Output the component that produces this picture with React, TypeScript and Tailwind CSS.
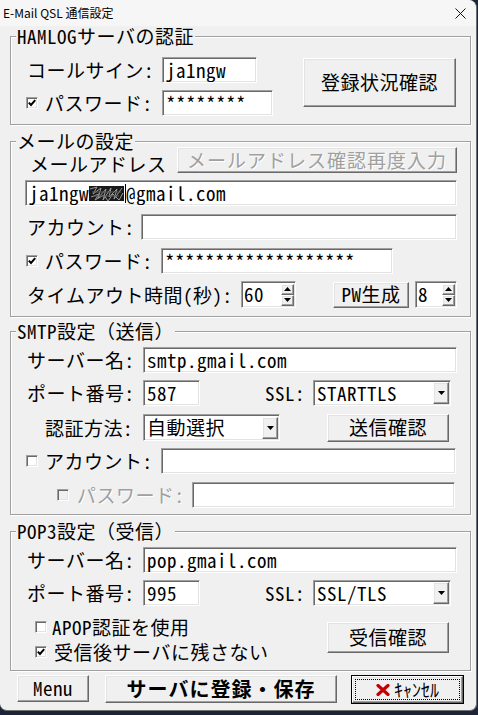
import React from "react";

const face = "[font-family:'Noto_Sans_Mono_CJK_JP','Noto_Sans_CJK_JP',monospace]";

// classic win32 3D edges
const edit =
  "bg-white border border-t-[#a0a0a0] border-l-[#a0a0a0] border-r-white border-b-white shadow-[inset_1px_1px_0_#696969,inset_-1px_-1px_0_#e3e3e3]";
const raised =
  "bg-[#f0f0f0] border border-t-white border-l-white border-r-[#696969] border-b-[#696969] shadow-[inset_-1px_-1px_0_#a0a0a0,inset_1px_1px_0_#e3e3e3]";
const group =
  "ml-[10px] w-[461px] border border-[#a0a0a0] shadow-[inset_1px_1px_0_#fff,1px_1px_0_#fff]";
const legend = "ml-[5px] px-[1px] bg-[#f0f0f0] leading-[20px]";

function Edit({
  className = "",
  children,
}: {
  className?: string;
  children?: React.ReactNode;
}) {
  return (
    <div
      className={`${edit} shrink-0 h-[26px] flex items-center pl-[3px] whitespace-nowrap overflow-hidden ${className}`}
    >
      {children}
    </div>
  );
}

function Button({
  className = "",
  children,
}: {
  className?: string;
  children?: React.ReactNode;
}) {
  return (
    <div
      className={`${raised} shrink-0 flex items-center justify-center whitespace-nowrap ${className}`}
    >
      {children}
    </div>
  );
}

function Check({
  checked = false,
  disabled = false,
}: {
  checked?: boolean;
  disabled?: boolean;
}) {
  return (
    <span
      className={`shrink-0 w-[12px] h-[12px] flex items-center justify-center border border-t-[#a0a0a0] border-l-[#a0a0a0] border-r-white border-b-white shadow-[inset_1px_1px_0_#696969,inset_-1px_-1px_0_#e3e3e3] ${
        disabled ? "bg-[#f0f0f0]" : "bg-white"
      }`}
    >
      {checked && (
        <svg width="8" height="8" viewBox="0 0 8 8">
          <path d="M0.8 3.6 L3 6 L7.2 1.2" stroke="#000" strokeWidth="2" fill="none" />
        </svg>
      )}
    </span>
  );
}

function Label({
  className = "",
  children,
}: {
  className?: string;
  children?: React.ReactNode;
}) {
  return (
    <span className={`shrink-0 whitespace-nowrap leading-[20px] ${className}`}>{children}</span>
  );
}

function Tri({ up = false }: { up?: boolean }) {
  return (
    <svg width="7" height="4" viewBox="0 0 7 4">
      <path d={up ? "M0 4 L3.5 0 L7 4Z" : "M0 0 L7 0 L3.5 4Z"} fill="#000" />
    </svg>
  );
}

function Select({
  className = "",
  children,
}: {
  className?: string;
  children?: React.ReactNode;
}) {
  return (
    <div className={`${edit} shrink-0 flex items-center ${className}`}>
      <span className="flex-1 pl-[3px] whitespace-nowrap overflow-hidden">{children}</span>
      <span className={`${raised} w-[16px] h-[22px] mr-[1px] flex items-center justify-center`}>
        <Tri />
      </span>
    </div>
  );
}

function Spin({
  className = "",
  children,
}: {
  className?: string;
  children?: React.ReactNode;
}) {
  return (
    <div className={`${edit} shrink-0 h-[27px] flex items-center ${className}`}>
      <span className="flex-1 pl-[2px]">{children}</span>
      <span className="flex flex-col w-[13px] mr-[1px]">
        <span className={`${raised} h-[11px] flex items-center justify-center`}>
          <Tri up />
        </span>
        <span className={`${raised} h-[11px] flex items-center justify-center`}>
          <Tri />
        </span>
      </span>
    </div>
  );
}

export default function App() {
  return (
    <div className="w-[478px] h-[715px] bg-[#1c2538] overflow-hidden">
      <div
        className={`w-[477px] h-[711px] bg-[#f0f0f0] rounded-tr-[8px] rounded-b-[7px] border-r border-b border-[#6f6f6f] text-black text-[19px] tracking-[0.5px] ${face}`}
      >
        {/* title bar */}
        <div className="h-[26px] flex items-center justify-between pl-[3px] pr-[10px] bg-[#f6f6f6] rounded-tr-[8px]">
          <span className="text-[12px] tracking-normal [font-family:'Noto_Sans_CJK_JP',sans-serif]">
            E-Mail QSL 通信設定
          </span>
          <svg width="11" height="11" viewBox="0 0 11 11">
            <path d="M0.5 0.5 L10.5 10.5 M10.5 0.5 L0.5 10.5" stroke="#111" strokeWidth="1" />
          </svg>
        </div>

        {/* HAMLOG */}
        <fieldset className={`${group} pb-[8px]`}>
          <legend className={legend}>HAMLOGサーバの認証</legend>
          <div className="flex mt-[11px]">
            <div className="w-[262px] flex flex-col gap-[7px]">
              <div className="flex items-center h-[26px] pl-[16px]">
                <Label className="w-[135px]">コールサイン:</Label>
                <Edit className="w-[95px]">ja1ngw</Edit>
              </div>
              <div className="flex items-center h-[26px] pl-[15px]">
                <Check checked />
                <Label className="ml-[7px] w-[117px]">パスワード:</Label>
                <Edit className="w-[111px]">********</Edit>
              </div>
            </div>
            <Button className="ml-[30px] mt-[1px] w-[153px] h-[49px]">登録状況確認</Button>
          </div>
        </fieldset>

        {/* mail */}
        <fieldset className={`${group} mt-[6px] pb-[8px]`}>
          <legend className={legend}>メールの設定</legend>
          <div className="flex items-end h-[26px] -mt-[4px] pl-[19px]">
            <Label className="w-[147px] !leading-[18px]">メールアドレス</Label>
            <Button className="w-[280px] h-[26px] text-[#a0a0a0] tracking-[1px] [text-shadow:1px_1px_0_#fff]">
              メールアドレス確認再度入力
            </Button>
          </div>
          <div className="flex items-center h-[26px] mt-[7px] pl-[14px]">
            <Edit className="w-[432px]">
              ja1ngw
              <svg width="36" height="17" viewBox="0 0 36 17" className="shrink-0">
                <rect x="0" y="1" width="35" height="15" fill="#1a1a1a" />
                <path
                  d="M1 4 L8 2 L4 9 L12 3 L9 13 L17 4 L14 15 L22 3 L20 12 L28 4 L25 14 L33 3 M2 12 L10 9 L6 15 L15 10 L19 16 L24 9 L30 15 L34 8"
                  stroke="#9a9a9a"
                  strokeWidth="1"
                  fill="none"
                />
                <path d="M3 7 H32 M5 11 H30" stroke="#5a5a5a" strokeWidth="1" />
              </svg>
              <span className="w-[1px] h-[19px] bg-black shrink-0" />
              @gmail.com
            </Edit>
          </div>
          <div className="flex items-center h-[26px] mt-[8px] pl-[16px]">
            <Label className="w-[114px]">アカウント:</Label>
            <Edit className="w-[316px]" />
          </div>
          <div className="flex items-center h-[26px] mt-[8px] pl-[15px]">
            <Check checked />
            <Label className="ml-[7px] w-[116px]">パスワード:</Label>
            <Edit className="w-[232px]">*******************</Edit>
          </div>
          <div className="flex items-center h-[27px] mt-[7px] pl-[16px]">
            <Label className="w-[214px]">タイムアウト時間(秒):</Label>
            <Spin className="w-[55px]">60</Spin>
            <Button className="ml-[37px] w-[76px] h-[26px]">PW生成</Button>
            <Spin className="ml-[6px] w-[42px]">8</Spin>
          </div>
        </fieldset>

        {/* SMTP */}
        <fieldset className={`${group} mt-[4px] pb-[6px]`}>
          <legend className={legend}>SMTP設定（送信）</legend>
          <div className="flex items-center h-[26px] mt-[6px] pl-[16px]">
            <Label className="w-[116px]">サーバー名:</Label>
            <Edit className="w-[314px]">smtp.gmail.com</Edit>
          </div>
          <div className="flex items-center h-[26px] mt-[7px] pl-[16px]">
            <Label className="w-[116px]">ポート番号:</Label>
            <Edit className="w-[57px]">587</Edit>
            <Label className="w-[113px] text-right pr-[8px]">SSL:</Label>
            <Select className="w-[138px] h-[26px]">STARTTLS</Select>
          </div>
          <div className="flex items-center h-[27px] mt-[8px] pl-[34px]">
            <Label className="w-[98px]">認証方法:</Label>
            <Select className="w-[137px] h-[27px]">自動選択</Select>
            <Button className="ml-[47px] w-[122px] h-[28px]">送信確認</Button>
          </div>
          <div className="flex items-center h-[26px] mt-[7px] pl-[15px]">
            <Check />
            <Label className="ml-[7px] w-[116px]">アカウント:</Label>
            <Edit className="w-[295px]" />
          </div>
          <div className="flex items-center h-[26px] mt-[8px] pl-[46px]">
            <Check disabled />
            <Label className="ml-[8px] w-[115px] text-[#a0a0a0] [text-shadow:1px_1px_0_#fff]">
              パスワード:
            </Label>
            <Edit className="w-[263px]" />
          </div>
        </fieldset>

        {/* POP3 */}
        <fieldset className={`${group} mt-[6px] pb-[6px]`}>
          <legend className={legend}>POP3設定（受信）</legend>
          <div className="flex items-center h-[26px] mt-[6px] pl-[16px]">
            <Label className="w-[116px]">サーバー名:</Label>
            <Edit className="w-[314px]">pop.gmail.com</Edit>
          </div>
          <div className="flex items-center h-[26px] mt-[7px] pl-[16px]">
            <Label className="w-[116px]">ポート番号:</Label>
            <Edit className="w-[57px]">995</Edit>
            <Label className="w-[113px] text-right pr-[8px]">SSL:</Label>
            <Select className="w-[138px] h-[26px]">SSL/TLS</Select>
          </div>
          <div className="flex mt-[9px]">
            <div className="w-[316px] flex flex-col gap-[1px]">
              <div className="flex items-center h-[24px] pl-[24px]">
                <Check />
                <Label className="ml-[5px]">APOP認証を使用</Label>
              </div>
              <div className="flex items-center h-[24px] pl-[24px]">
                <Check checked />
                <Label className="ml-[7px]">受信後サーバに残さない</Label>
              </div>
            </div>
            <Button className="mt-[7px] w-[122px] h-[31px]">受信確認</Button>
          </div>
        </fieldset>

        {/* bottom buttons */}
        <div className="flex items-start mt-[4px]">
          <Button className="ml-[17px] w-[72px] h-[27px]">Menu</Button>
          <Button className="ml-[16px] w-[232px] h-[28px] text-[20px] font-bold tracking-[1px]">
            サーバに登録・保存
          </Button>
          <div className="ml-[14px] w-[113px] h-[29px] border border-black shrink-0">
            <div className={`${raised} w-full h-full flex items-center justify-center`}>
              <div className="w-[105px] h-[21px] border border-dotted border-black flex items-center justify-center gap-[4px]">
                <svg width="14" height="12" viewBox="0 0 14 12">
                  <path d="M2 1.5 L12 10.5 M12 1.5 L2 10.5" stroke="#c40000" strokeWidth="3.2" strokeLinecap="round" />
                </svg>
                <span className="text-[18px] tracking-normal">ｷｬﾝｾﾙ</span>
              </div>
            </div>
          </div>
        </div>
      </div>
    </div>
  );
}
